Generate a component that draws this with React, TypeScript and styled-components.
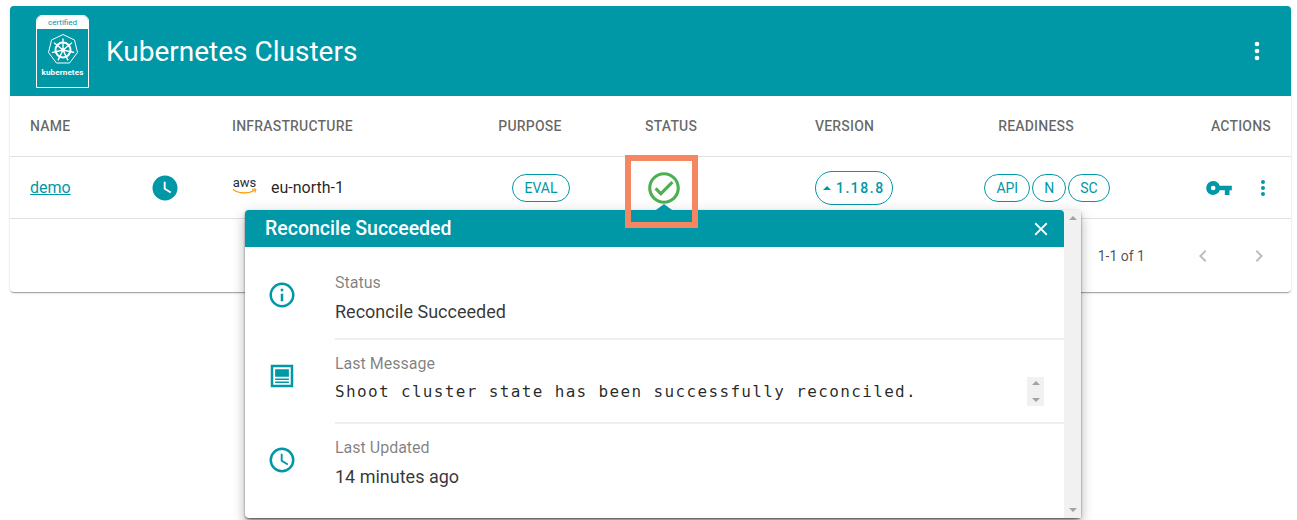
import React from "react";
import styled, { createGlobalStyle } from "styled-components";

const TEAL = "#0097a7";

const Global = createGlobalStyle`
  html, body { margin: 0; padding: 0; background: #fff; }
  body { font-family: Roboto, "Liberation Sans", sans-serif; width: 1297px; height: 520px; overflow: hidden; }
`;

const Page = styled.div`
  position: relative;
  padding: 6px 6px 0 10px;
  height: 520px;
  box-sizing: border-box;
`;

const Card = styled.section`
  background: #fff;
  border-radius: 4px;
  overflow: hidden;
  box-shadow: 0 2px 1px -1px rgba(0,0,0,.2), 0 1px 1px 0 rgba(0,0,0,.14), 0 1px 3px 0 rgba(0,0,0,.12);
`;

const Toolbar = styled.header`
  height: 90px;
  background: ${TEAL};
  display: flex;
  align-items: center;
  padding: 0 20px 0 26px;
  color: #fff;
`;

const Badge = styled.div`
  width: 53px;
  height: 73px;
  margin-top: 0;
  border: 1px solid #fff;
  border-radius: 6px 6px 0 0;
  box-sizing: border-box;
  display: flex;
  flex-direction: column;
  align-items: center;
  flex: none;
  overflow: hidden;
`;

const BadgeTop = styled.div`
  width: 100%;
  height: 13px;
  background: #fff;
  color: ${TEAL};
  font-size: 8px;
  line-height: 13px;
  text-align: center;
`;

const BadgeWord = styled.div`
  font-size: 8px;
  font-weight: 700;
  line-height: 9px;
  letter-spacing: .15px;
`;

const Title = styled.h1`
  margin: 0 0 0 17px;
  font-size: 28px;
  font-weight: 400;
  flex: 1;
`;

const Row = styled.div<{ $h: number }>`
  display: grid;
  grid-template-columns: 120px 82px 245px 168px 170px 169px 166px 161px;
  height: ${(p) => p.$h}px;
  border-bottom: 1px solid #e0e0e0;
  align-items: center;
`;

const Cell = styled.div<{ $align?: string }>`
  padding: 0 20px;
  display: flex;
  align-items: center;
  justify-content: ${(p) => p.$align || "flex-start"};
  min-width: 0;
`;

const Head = styled.span<{ $spacer?: boolean }>`
  font-size: 14px;
  font-weight: 500;
  letter-spacing: .2px;
  color: rgba(0,0,0,.6);
  white-space: nowrap;
  margin-right: ${(p) => (p.$spacer ? "22px" : "0")};
`;

const NameLink = styled.a`
  color: ${TEAL};
  font-size: 16px;
  text-decoration: underline;
`;

const Plain = styled.span`
  font-size: 16px;
  color: rgba(0,0,0,.87);
`;

const AwsMark = styled.div`
  width: 25px;
  margin-right: 14px;
  display: flex;
  flex-direction: column;
  align-items: center;
  color: #232f3e;
  font-size: 13px;
  line-height: 11px;
  height: 22px;
`;

const Chip = styled.span<{ $mono?: boolean }>`
  display: inline-flex;
  align-items: center;
  height: 28px;
  padding: 0 11px;
  box-sizing: border-box;
  border: 1px solid ${TEAL};
  border-radius: 14px;
  color: ${TEAL};
  font-size: 14px;
  white-space: nowrap;
`;

const VersionChip = styled(Chip)`
  height: 34px;
  border-radius: 17px;
  padding: 0 7px 0 7px;
  font-family: "Roboto", sans-serif;
  font-weight: 500;
  letter-spacing: 1.5px;
  gap: 5px;
`;

const ChipRow = styled.div`
  display: flex;
  gap: 2px;
`;

const Caret = styled.i`
  width: 0;
  height: 0;
  border-left: 4px solid transparent;
  border-right: 4px solid transparent;
  border-bottom: 4px solid ${TEAL};
`;

const Icon = styled.svg<{ $size: number; $color?: string }>`
  width: ${(p) => p.$size}px;
  height: ${(p) => p.$size}px;
  fill: ${(p) => p.$color || TEAL};
  flex: none;
  display: block;
`;

const Actions = styled.div`
  display: flex;
  align-items: center;
  gap: 18px;
  margin-right: -4px;
`;

const Footer = styled.div`
  height: 73px;
  display: flex;
  align-items: center;
  justify-content: flex-end;
  padding: 0 20px 0 0;
  margin-top: 0;
`;

const Range = styled.span`
  font-size: 14px;
  color: rgba(0,0,0,.7);
  margin-right: 46px;
`;

const Pager = styled.div`
  display: flex;
  gap: 32px;
`;

const Marker = styled.div`
  position: absolute;
  left: 625px;
  top: 155px;
  width: 73px;
  height: 73px;
  border: 6px solid #f58662;
  box-sizing: border-box;
  z-index: 5;
`;

const Popover = styled.aside`
  position: absolute;
  left: 245px;
  top: 210px;
  width: 836px;
  height: 308px;
  background: #fff;
  border-radius: 4px;
  display: flex;
  box-shadow: 0 5px 5px -3px rgba(0,0,0,.2), 0 8px 10px 1px rgba(0,0,0,.14), 0 3px 14px 2px rgba(0,0,0,.12), 0 1px 2px rgba(0,0,0,.5);
  z-index: 3;
  &::before {
    content: "";
    position: absolute;
    left: 411px;
    top: -6px;
    border-left: 8px solid transparent;
    border-right: 8px solid transparent;
    border-bottom: 6px solid ${TEAL};
  }
`;

const PopBody = styled.div`
  flex: 1;
  min-width: 0;
`;

const PopHead = styled.div`
  height: 37px;
  background: ${TEAL};
  color: #fff;
  border-radius: 4px 4px 0 0;
  display: flex;
  align-items: center;
  justify-content: space-between;
  padding: 0 12px 0 20px;
  font-size: 20px;
  font-weight: 500;
`;

const PopTitle = styled.span`
  font-size: 19.5px;
`;

const Scrollbar = styled.div<{ $w: number }>`
  width: ${(p) => p.$w}px;
  background: #f1f1f1;
  display: flex;
  flex-direction: column;
  align-items: center;
  justify-content: space-between;
  flex: none;
  box-sizing: border-box;
`;

const Arrow = styled.i<{ $down?: boolean; $margin: number }>`
  width: 0;
  height: 0;
  margin: ${(p) => p.$margin}px 0;
  border-left: 4px solid transparent;
  border-right: 4px solid transparent;
  ${(p) => (p.$down ? "border-top: 4px solid #a3a3a3;" : "border-bottom: 4px solid #a3a3a3;")}
`;

const InfoList = styled.div`
  padding-top: 12px;
`;

const InfoRow = styled.div<{ $h: number; $line?: boolean }>`
  display: flex;
  height: ${(p) => p.$h}px;
  padding-left: 22px;
`;

const InfoIcon = styled.div`
  width: 68px;
  flex: none;
  padding-top: 21px;
`;

const InfoContent = styled.div<{ $line?: boolean }>`
  flex: 1;
  min-width: 0;
  border-bottom: ${(p) => (p.$line ? "2px solid #eee" : "none")};
  padding-top: 13px;
  position: relative;
  box-sizing: border-box;
  display: flex;
  flex-direction: column;
`;

const Label = styled.div`
  font-size: 16px;
  line-height: 22px;
  color: rgba(0,0,0,.5);
`;

const Value = styled.div`
  font-size: 18px;
  line-height: 26px;
  margin-top: 5px;
  color: rgba(0,0,0,.8);
`;

const MessageLine = styled.div`
  display: flex;
  justify-content: space-between;
  margin-top: 2px;
  padding-right: 20px;
`;

const Mono = styled.div`
  font-family: "DejaVu Sans Mono", monospace;
  font-size: 16px;
  line-height: 30px;
  letter-spacing: 1.35px;
  white-space: nowrap;
  color: rgba(0,0,0,.85);
`;

const Mini = styled(Scrollbar)`
  height: 29px;
`;

const paths = {
  clock: "M12,2A10,10 0 0,0 2,12A10,10 0 0,0 12,22A10,10 0 0,0 22,12A10,10 0 0,0 12,2M16.2,16.2L11,13V7H12.5V12.2L17,14.9L16.2,16.2Z",
  check: "M12 2C6.5 2 2 6.5 2 12S6.5 22 12 22 22 17.5 22 12 17.5 2 12 2M12 20C7.59 20 4 16.41 4 12S7.59 4 12 4 20 7.59 20 12 16.41 20 12 20M16.59 7.58L10 14.17L7.41 11.59L6 13L10 17L18 9L16.59 7.58Z",
  key: "M7,14A2,2 0 0,1 5,12A2,2 0 0,1 7,10A2,2 0 0,1 9,12A2,2 0 0,1 7,14M12.65,10C11.83,7.67 9.61,6 7,6A6,6 0 0,0 1,12A6,6 0 0,0 7,18C9.61,18 11.83,16.33 12.65,14H17V18H21V14H23V10H12.65Z",
  dots: "M12,16A2,2 0 0,1 14,18A2,2 0 0,1 12,20A2,2 0 0,1 10,18A2,2 0 0,1 12,16M12,10A2,2 0 0,1 14,12A2,2 0 0,1 12,14A2,2 0 0,1 10,12A2,2 0 0,1 12,10M12,4A2,2 0 0,1 14,6A2,2 0 0,1 12,8A2,2 0 0,1 10,6A2,2 0 0,1 12,4Z",
  info: "M11,9H13V7H11M12,20C7.59,20 4,16.41 4,12C4,7.59 7.59,4 12,4C16.41,4 20,7.59 20,12C20,16.41 16.41,20 12,20M12,2A10,10 0 0,0 2,12A10,10 0 0,0 12,22A10,10 0 0,0 22,12A10,10 0 0,0 12,2M11,17H13V11H11V17Z",
  clockO: "M12,20A8,8 0 0,0 20,12A8,8 0 0,0 12,4A8,8 0 0,0 4,12A8,8 0 0,0 12,20M12,2A10,10 0 0,1 22,12A10,10 0 0,1 12,22C6.47,22 2,17.5 2,12A10,10 0 0,1 12,2M12.5,7V12.25L17,14.92L16.25,16.16L11,13V7H12.5Z",
  close: "M19,6.41L17.59,5L12,10.59L6.41,5L5,6.41L10.59,12L5,17.59L6.41,19L12,13.41L17.59,19L19,17.59L13.41,12L19,6.41Z",
  left: "M15.41,16.58L10.83,12L15.41,7.41L14,6L8,12L14,18L15.41,16.58Z",
  right: "M8.59,16.58L13.17,12L8.59,7.41L10,6L16,12L10,18L8.59,16.58Z",
  message: "M3,3H21V21H3V3M5,5V19H19V5H5M6.5,6.5H17.5V12.5H6.5V6.5M6.5,14H17.5V15.2H6.5V14M6.5,16.4H17.5V17.6H6.5V16.4Z",
};

const Glyph = ({ d, size, color }: { d: string; size: number; color?: string }) => (
  <Icon viewBox="0 0 24 24" $size={size} $color={color}>
    <path d={d} fillRule="evenodd" />
  </Icon>
);

const HelmWheel = () => {
  const spokes = [0, 51.4, 102.8, 154.3, 205.7, 257.1, 308.6];
  return (
    <svg width="36" height="36" viewBox="0 0 36 36" style={{ display: "block", marginTop: 3 }} fill="none" stroke="#fff">
      <path d="M18 2.5 L29.5 8 L32.5 20.5 L24.5 31 L11.5 31 L3.5 20.5 L6.5 8 Z" strokeWidth="1" strokeLinejoin="round" />
      <circle cx="18" cy="18" r="7.5" strokeWidth="2" />
      <circle cx="18" cy="18" r="2" fill="#fff" stroke="none" />
      {spokes.map((a) => (
        <line key={a} x1="18" y1="18" x2="18" y2="6.5" strokeWidth="1.4" transform={`rotate(${a} 18 18)`} />
      ))}
    </svg>
  );
};

const Smile = () => (
  <svg width="25" height="7" viewBox="0 0 25 7" fill="none" style={{ display: "block" }}>
    <path d="M1 1.5 C7 6 17 6 23 2" stroke="#f90" strokeWidth="1.3" />
    <path d="M20 1.2 L24 1 L23 4.5" stroke="#f90" strokeWidth="1" />
  </svg>
);

export default function App() {
  return (
    <>
      <Global />
      <Page>
        <Card>
          <Toolbar>
            <Badge>
              <BadgeTop>certified</BadgeTop>
              <HelmWheel />
              <BadgeWord>kubernetes</BadgeWord>
            </Badge>
            <Title>Kubernetes Clusters</Title>
            <Glyph d={paths.dots} size={28} color="#fff" />
          </Toolbar>
          <Row $h={60}>
            <Cell><Head>NAME</Head></Cell>
            <Cell />
            <Cell><Head>INFRASTRUCTURE</Head></Cell>
            <Cell $align="center"><Head $spacer>PURPOSE</Head></Cell>
            <Cell><Head>STATUS</Head></Cell>
            <Cell><Head>VERSION</Head></Cell>
            <Cell $align="center"><Head $spacer>READINESS</Head></Cell>
            <Cell $align="flex-end"><Head>ACTIONS</Head></Cell>
          </Row>
          <Row $h={61}>
            <Cell><NameLink>demo</NameLink></Cell>
            <Cell><Glyph d={paths.clock} size={30} /></Cell>
            <Cell>
              <AwsMark>aws<Smile /></AwsMark>
              <Plain>eu-north-1</Plain>
            </Cell>
            <Cell $align="center"><Chip>EVAL</Chip></Cell>
            <Cell><Glyph d={paths.check} size={38} color="#4caf50" /></Cell>
            <Cell><VersionChip><Caret />1.18.8</VersionChip></Cell>
            <Cell $align="center">
              <ChipRow>
                <Chip>API</Chip>
                <Chip>N</Chip>
                <Chip>SC</Chip>
              </ChipRow>
            </Cell>
            <Cell $align="flex-end">
              <Actions>
                <Glyph d={paths.key} size={28} />
                <Glyph d={paths.dots} size={24} />
              </Actions>
            </Cell>
          </Row>
          <Footer>
            <Range>1-1 of 1</Range>
            <Pager>
              <Glyph d={paths.left} size={24} color="rgba(0,0,0,.26)" />
              <Glyph d={paths.right} size={24} color="rgba(0,0,0,.26)" />
            </Pager>
          </Footer>
        </Card>
        <Marker />
        <Popover>
          <PopBody>
            <PopHead>
              <PopTitle>Reconcile Succeeded</PopTitle>
              <Glyph d={paths.close} size={22} color="#fff" />
            </PopHead>
            <InfoList>
              <InfoRow $h={81}>
                <InfoIcon><Glyph d={paths.info} size={30} /></InfoIcon>
                <InfoContent $line>
                  <Label>Status</Label>
                  <Value>Reconcile Succeeded</Value>
                </InfoContent>
              </InfoRow>
              <InfoRow $h={84}>
                <InfoIcon><Glyph d={paths.message} size={30} /></InfoIcon>
                <InfoContent $line>
                  <Label>Last Message</Label>
                  <MessageLine>
                    <Mono>Shoot cluster state has been successfully reconciled.</Mono>
                    <Mini $w={17}>
                      <Arrow $margin={4} />
                      <Arrow $down $margin={4} />
                    </Mini>
                  </MessageLine>
                </InfoContent>
              </InfoRow>
              <InfoRow $h={84}>
                <InfoIcon><Glyph d={paths.clockO} size={30} /></InfoIcon>
                <InfoContent>
                  <Label>Last Updated</Label>
                  <Value>14 minutes ago</Value>
                </InfoContent>
              </InfoRow>
            </InfoList>
          </PopBody>
          <Scrollbar $w={17}>
            <Arrow $margin={6} />
            <Arrow $down $margin={6} />
          </Scrollbar>
        </Popover>
      </Page>
    </>
  );
}
